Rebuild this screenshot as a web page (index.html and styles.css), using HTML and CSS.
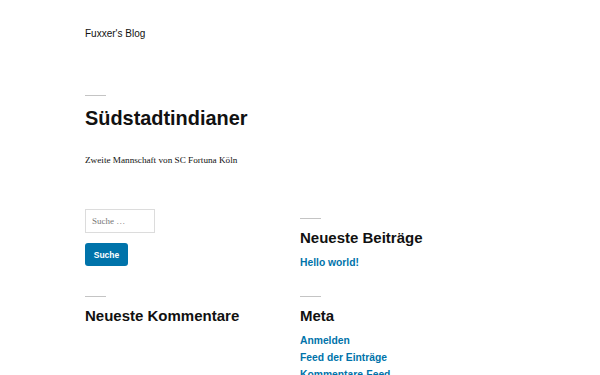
FILE: index.html
```html
<!DOCTYPE html>
<html lang="de">
<head>
    <meta charset="UTF-8">
    <meta name="viewport" content="width=device-width, initial-scale=1.0">
    <title>Fuxxer's Blog</title>
    <link rel="stylesheet" href="styles.css">
</head>
<body>
<div class="page">
  <header class="site-header">
    <p class="site-title">Fuxxer's Blog</p>
  </header>

  <main class="site-main">
    <h1 class="page-title">Südstadtindianer</h1>
    <p class="page-desc">Zweite Mannschaft von SC Fortuna Köln</p>
  </main>

  <aside class="widget-area">
    <section class="widget widget-search">
      <form class="search-form">
        <input class="search-field" type="search" placeholder="Suche …">
        <button class="search-submit" type="button">Suche</button>
      </form>
    </section>

    <section class="widget">
      <h2 class="widget-title">Neueste Beiträge</h2>
      <ul class="widget-list">
        <li><a href="#">Hello world!</a></li>
      </ul>
    </section>

    <section class="widget">
      <h2 class="widget-title">Neueste Kommentare</h2>
    </section>

    <section class="widget">
      <h2 class="widget-title">Meta</h2>
      <ul class="widget-list">
        <li><a href="#">Anmelden</a></li>
        <li><a href="#">Feed der Einträge</a></li>
        <li><a href="#">Kommentare-Feed</a></li>
      </ul>
    </section>
  </aside>
</div>
</body>
</html>
```

FILE: styles.css
```css
* {
  margin: 0;
  padding: 0;
  box-sizing: border-box;
}

body {
  background-color: #fff;
  color: #111;
  font-family: "Liberation Sans", Arial, sans-serif;
}

.page {
  padding: 26px 85px 0;
}

.site-title {
  font-size: 10px;
  line-height: 15px;
  color: #111;
}

.site-main {
  margin-top: 54px;
}

.page-title {
  font-size: 19.9px;
  line-height: 24px;
  font-weight: 700;
}

.page-title::before,
.widget-title::before {
  content: "";
  display: block;
  width: 21px;
  height: 1px;
  background-color: #c4c4c4;
  margin-bottom: 10px;
}

.page-desc {
  margin-top: 23px;
  font-family: "Liberation Serif", "Times New Roman", serif;
  font-size: 9.2px;
  line-height: 14px;
  color: #111;
}

.widget-area {
  margin-top: 42px;
  display: grid;
  grid-template-columns: 215px 215px;
  row-gap: 16px;
  align-items: start;
}

.widget-title {
  margin-top: 9px;
  font-size: 15px;
  line-height: 18px;
  font-weight: 700;
}

.widget-list {
  list-style: none;
  margin-top: 7px;
}

.widget-list li {
  font-size: 10.3px;
  line-height: 17px;
  font-weight: 700;
}

.widget-list a {
  color: #0073aa;
  text-decoration: none;
}

.search-form {
  display: flex;
  flex-direction: column;
  align-items: flex-start;
  gap: 10px;
}

.search-field {
  width: 70px;
  height: 24px;
  border: 1px solid #dcdcdc;
  padding: 0 6px;
  font-family: "Liberation Serif", "Times New Roman", serif;
  font-size: 9px;
  color: #111;
  outline: none;
}

.search-field::placeholder {
  color: #767676;
}

.search-submit {
  width: 43px;
  height: 23px;
  border: none;
  border-radius: 3px;
  background-color: #0073aa;
  color: #fff;
  font-family: "Liberation Sans", Arial, sans-serif;
  font-size: 8.5px;
  font-weight: 700;
}
```
